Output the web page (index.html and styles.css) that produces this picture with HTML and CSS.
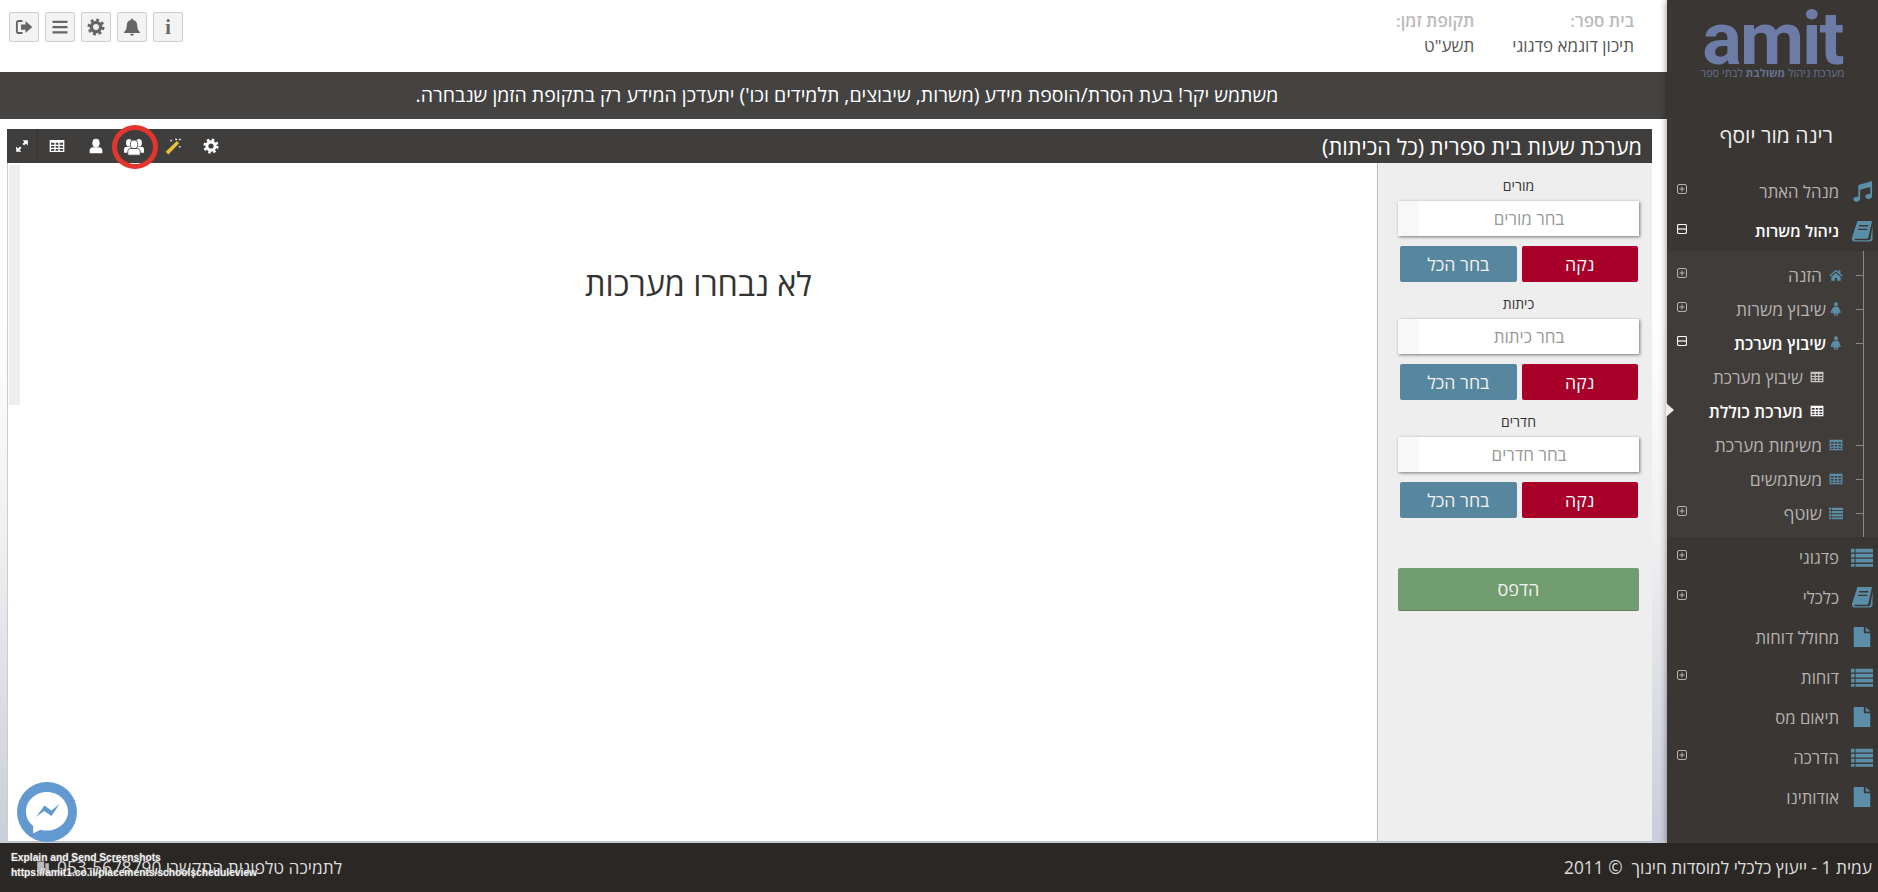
FILE: index.html
```html
<!DOCTYPE html>
<html lang="he" dir="rtl">
<head>
  <meta charset="UTF-8">
  <title>amit - מערכת כוללת</title>
  <link rel="stylesheet" href="styles.css">
</head>
<body>
  <!-- shared icons -->
  <svg class="icon-defs" xmlns="http://www.w3.org/2000/svg">
    <symbol id="i-cog" viewBox="0 0 24 24"><circle cx="12" cy="12" r="6.2" fill="none" stroke="currentColor" stroke-width="4.6"/><circle cx="12" cy="12" r="9.6" fill="none" stroke="currentColor" stroke-width="3.6" stroke-dasharray="3.8 3.74"/></symbol>
    <symbol id="i-table" viewBox="0 0 24 24"><path fill="currentColor" fill-rule="evenodd" d="M1 3h22v18H1zM3 7v3h5V7zm7 0v3h4V7zm6 0v3h5V7zM3 12v2.500h5V12zm7 0v2.500h4V12zm6 0v2.500h5V12zM3 16.500V19h5v-2.500zm7 0V19h4v-2.500zm6 0V19h5v-2.500z"/></symbol>
    <symbol id="i-list" viewBox="0 0 24 24"><path fill="currentColor" d="M0 3h4v4H0zM5 3h19v4H5zM0 8.500h4v4H0zM5 8.500h19v4H5zM0 14h4v4H0zM5 14h19v4H5zM0 19.500h4v3H0zM5 19.500h19v3H5z"/></symbol>
    <symbol id="i-file" viewBox="0 0 24 24"><path fill="currentColor" d="M3 1h11v7h7v15H3zM16 1l5 5h-5z"/></symbol>
    <symbol id="i-book" viewBox="0 0 24 24"><path fill="currentColor" fill-rule="evenodd" d="M7 1h16l-4 17.500c-.3 1.500-1 2-2.500 2H5c-1 0-1.500.7-1.300 1 .2.500.7.500 1.300.500h14.500c1 0 1.500-.5 1.800-1.500L23.500 6v15c-.5 1.500-1.500 2.500-3 2.500H4C2 23.500.5 21.500 1 19.500zM9 5.500l-.4 1.500h10l.4-1.500zM8 9.500l-.4 1.500h10l.4-1.500z"/></symbol>
    <symbol id="i-music" viewBox="0 0 24 24"><path fill="currentColor" d="M8 5.500 23 1v16.500c0 2-2 3.300-4 3.300s-3.500-1-3.500-2.700 1.800-2.800 3.700-2.800c.7 0 1.300.1 1.800.3V7.500L10 10.500v10c0 2-2 3.300-4 3.300s-3.500-1-3.500-2.700 1.800-2.800 3.700-2.800c.7 0 1.300.1 1.800.3z"/></symbol>
    <symbol id="i-home" viewBox="0 0 24 24"><path fill="currentColor" d="M12 3 .5 13l1.500 1.700L12 6l10 8.700 1.500-1.700-4-3.500V4h-3v3zM4 15.500 12 8.500l8 7V22h-6v-5h-4v5H4z"/></symbol>
    <symbol id="i-female" viewBox="0 0 24 24"><circle cx="12" cy="4" r="3.400" fill="currentColor"/><path fill="currentColor" d="M8.500 8h7l2 3 3 7-2.500 1-2.500-5 2 5.500H15V24h-2v-4.500h-2V24H9v-4.500H5.500l2-5.500L5 19l-2.500-1 3-7z"/></symbol>
    <symbol id="i-plus" viewBox="0 0 10 10"><rect x=".5" y=".5" width="9" height="9" rx="1.500" fill="none" stroke="currentColor"/><path stroke="currentColor" d="M2.500 5h5M5 2.500v5"/></symbol>
    <symbol id="i-minus" viewBox="0 0 10 10"><rect x=".5" y=".5" width="9" height="9" rx="1.500" fill="none" stroke="currentColor" stroke-width="1.200"/><path stroke="currentColor" stroke-width="1.200" d="M1 5h8"/></symbol>
  </svg>

  <div class="page">
    <aside class="sidebar">
      <div class="logo">
        <div class="logo-word" dir="ltr">amit</div>
        <div class="logo-sub">מערכת ניהול <b>משולבת</b> לבתי ספר</div>
      </div>
      <div class="user-name">רינה מור יוסף</div>

      <ul class="nav">
        <li class="nav-item"><svg class="nav-icon"><use href="#i-music"/></svg><span>מנהל האתר</span><svg class="toggle"><use href="#i-plus"/></svg></li>
        <li class="nav-item active"><svg class="nav-icon"><use href="#i-book"/></svg><span>ניהול משרות</span><svg class="toggle"><use href="#i-minus"/></svg></li>
        <li>
          <ul class="subnav">
            <li class="sub-item"><svg class="sub-icon"><use href="#i-home"/></svg><span>הזנה</span><svg class="toggle"><use href="#i-plus"/></svg></li>
            <li class="sub-item"><svg class="sub-icon narrow"><use href="#i-female"/></svg><span>שיבוץ משרות</span><svg class="toggle"><use href="#i-plus"/></svg></li>
            <li class="sub-item active"><svg class="sub-icon narrow"><use href="#i-female"/></svg><span>שיבוץ מערכת</span><svg class="toggle"><use href="#i-minus"/></svg></li>
            <li class="leaf-item"><svg class="leaf-icon"><use href="#i-table"/></svg><span>שיבוץ מערכת</span></li>
            <li class="leaf-item current"><svg class="leaf-icon"><use href="#i-table"/></svg><span>מערכת כוללת</span></li>
            <li class="sub-item"><svg class="sub-icon"><use href="#i-table"/></svg><span>משימות מערכת</span></li>
            <li class="sub-item"><svg class="sub-icon"><use href="#i-table"/></svg><span>משתמשים</span></li>
            <li class="sub-item"><svg class="sub-icon"><use href="#i-list"/></svg><span>שוטף</span><svg class="toggle"><use href="#i-plus"/></svg></li>
          </ul>
        </li>
        <li class="nav-item"><svg class="nav-icon"><use href="#i-list"/></svg><span>פדגוגי</span><svg class="toggle"><use href="#i-plus"/></svg></li>
        <li class="nav-item"><svg class="nav-icon"><use href="#i-book"/></svg><span>כלכלי</span><svg class="toggle"><use href="#i-plus"/></svg></li>
        <li class="nav-item"><svg class="nav-icon"><use href="#i-file"/></svg><span>מחולל דוחות</span></li>
        <li class="nav-item"><svg class="nav-icon"><use href="#i-list"/></svg><span>דוחות</span><svg class="toggle"><use href="#i-plus"/></svg></li>
        <li class="nav-item"><svg class="nav-icon"><use href="#i-file"/></svg><span>תיאום מס</span></li>
        <li class="nav-item"><svg class="nav-icon"><use href="#i-list"/></svg><span>הדרכה</span><svg class="toggle"><use href="#i-plus"/></svg></li>
        <li class="nav-item"><svg class="nav-icon"><use href="#i-file"/></svg><span>אודותינו</span></li>
      </ul>
    </aside>

    <main class="main">
      <header class="topbar">
        <div class="info">
          <div class="info-block">
            <div class="info-label">בית ספר:</div>
            <div class="info-value">תיכון דוגמא פדגוגי</div>
          </div>
          <div class="info-block">
            <div class="info-label">תקופת זמן:</div>
            <div class="info-value">תשע"ט</div>
          </div>
        </div>
        <div class="top-actions">
          <button class="top-btn info-i">i</button>
          <button class="top-btn"><svg viewBox="0 0 24 24"><path fill="currentColor" d="M12 1c1 0 1.600.6 1.600 1.500 3.700.7 5.400 3.500 5.400 7.500 0 4 1 6.500 3.500 8.500V20h-21v-1.500C4 16.500 5 14 5 10c0-4 1.700-6.800 5.400-7.500C10.400 1.600 11 1 12 1zM9.500 21h5a2.500 2.500 0 0 1-5 0z"/></svg></button>
          <button class="top-btn"><svg><use href="#i-cog"/></svg></button>
          <button class="top-btn"><svg viewBox="0 0 24 24"><path fill="currentColor" d="M2 3.500h20v3H2zM2 10.500h20v3H2zM2 17.500h20v3H2z"/></svg></button>
          <button class="top-btn"><svg viewBox="0 0 24 24"><path fill="none" stroke="currentColor" stroke-width="2.500" d="M10 4H5a2.500 2.500 0 0 0-2.500 2.500v11A2.500 2.500 0 0 0 5 20h5"/><path fill="currentColor" d="M8 8.500h6V4l9 8-9 8v-4.500H8z"/></svg></button>
        </div>
      </header>

      <div class="notice">משתמש יקר! בעת הסרת/הוספת מידע (משרות, שיבוצים, תלמידים וכו') יתעדכן המידע רק בתקופת הזמן שנבחרה.</div>

      <section class="panel">
        <div class="panel-head">
          <h2 class="panel-title">מערכת שעות בית ספרית (כל הכיתות)</h2>
          <div class="panel-tools">
            <svg class="tool"><use href="#i-cog"/></svg>
            <svg class="tool wand" viewBox="0 0 24 24"><path fill="currentColor" d="M17 5.500 20 8.500 6 23 2.500 19.500z"/><path fill="#fff" d="M15 1l.8 2 2-.5-.8 2-2-.3zM21 1.500l.6 1.500 1.400.4-1.400.5-.6 1.500-.6-1.500-1.400-.5 1.400-.4zM9.500 3l.5 1.500 1.500.5-1.500.5-.5 1.500-.5-1.500L7.500 5 9 4.500zM21 11l.5 1.500 1.500.5-1.500.5-.5 1.500-.5-1.500-1.500-.5 1.500-.5z"/></svg>
            <svg class="tool group" viewBox="0 0 24 24"><ellipse cx="6" cy="8" rx="3.500" ry="4.500" fill="currentColor"/><ellipse cx="18" cy="8" rx="3.500" ry="4.500" fill="currentColor"/><path fill="currentColor" d="M0 20v-4c0-2 1.500-3 3-3h6v7zM24 20v-4c0-2-1.500-3-3-3h-6v7z"/><ellipse cx="12" cy="10" rx="4.500" ry="5.200" fill="currentColor" stroke="#403e3d"/><path fill="currentColor" stroke="#403e3d" d="M4.500 23v-4c0-3 2-4 4-4h7c2 0 4 1 4 4v4z"/></svg>
            <svg class="tool" viewBox="0 0 24 24"><ellipse cx="12" cy="7.500" rx="5.500" ry="6.500" fill="currentColor"/><path fill="currentColor" d="M2.500 23v-4c0-3 2-5 5-5h9c3 0 5 2 5 5v4z"/></svg>
            <svg class="tool tool-last"><use href="#i-table"/></svg>
            <span class="tool-sep"></span>
            <svg class="tool expand" viewBox="0 0 24 24"><path fill="currentColor" d="M22 2v9l-3.200-3.200-3.300 3.300-2.600-2.600 3.300-3.300L13 2zM2 22v-9l3.200 3.200 3.300-3.300 2.600 2.600-3.300 3.300L11 22z"/></svg>
          </div>
        </div>

        <div class="panel-body">
          <div class="filters">
            <div class="filter">
              <div class="filter-label">מורים</div>
              <div class="select-box"><span>בחר מורים</span></div>
              <div class="btn-row">
                <button class="btn btn-red">נקה</button>
                <button class="btn btn-blue">בחר הכל</button>
              </div>
            </div>
            <div class="filter">
              <div class="filter-label">כיתות</div>
              <div class="select-box"><span>בחר כיתות</span></div>
              <div class="btn-row">
                <button class="btn btn-red">נקה</button>
                <button class="btn btn-blue">בחר הכל</button>
              </div>
            </div>
            <div class="filter">
              <div class="filter-label">חדרים</div>
              <div class="select-box"><span>בחר חדרים</span></div>
              <div class="btn-row">
                <button class="btn btn-red">נקה</button>
                <button class="btn btn-blue">בחר הכל</button>
              </div>
            </div>
            <button class="btn-print">הדפס</button>
          </div>
          <div class="schedule">
            <h1 class="empty-msg">לא נבחרו מערכות</h1>
            <div class="scroll-strip"></div>
          </div>
        </div>
      </section>
    </main>

    <footer class="footer">
      <div>עמית 1 - ייעוץ כלכלי למוסדות חינוך &nbsp;© 2011</div>
      <div class="support">לתמיכה טלפונית התקשרו 053-5678790
        <svg class="phone" viewBox="0 0 24 24"><path fill="currentColor" d="M2 1h12v22H2zM16 4h6v19h-6z"/></svg>
      </div>
    </footer>
  </div>

  <!-- things that lie over the page -->
  <span class="tool-ring"></span>
  <span class="current-arrow"></span>
  <div class="messenger">
    <svg viewBox="0 0 60 60"><path fill="#fff" d="M30 10c-11.600 0-21 8.500-21 19.500 0 6 2.700 11 7.200 14.500v7.500l7-3.800c2.100.6 4.400.9 6.800.9 11.600 0 21-8.500 21-19.100S41.600 10 30 10z"/><path fill="#6199d0" d="m19 35 8.500-11.500 7 5 8-6.500-8 12-7.500-5z"/></svg>
  </div>
  <div class="shot-tip" dir="ltr">
    <div>Explain and Send Screenshots</div>
    <div>https://amit1.co.il/placements/schoolscheduleview</div>
  </div>
</body>
</html>
```

FILE: styles.css
```css
* {
  box-sizing: border-box;
}
html, body {
  margin: 0;
  height: 100%;
  overflow: hidden;
}
body {
  font-family: "Open Sans", "Liberation Sans", Arial, sans-serif;
  font-size: 15px;
  color: #333;
  background: linear-gradient(#ffffff 35%, #f0f0f2 60%, #c3c8d6);
}
.icon-defs {
  display: none;
}
.page {
  display: grid;
  grid-template-columns: 211px 1fr;
  grid-template-rows: 843px 49px;
  height: 892px;
}

/* sidebar */
.sidebar {
  background-color: #3a3633;
  box-shadow: 0 0 7px rgba(0, 0, 0, 0.45);
  z-index: 1;
}
.logo {
  height: 100px;
  padding-top: 4px;
  text-align: center;
  color: #6d7ca6;
}
.logo-word {
  font-family: Roboto, "Open Sans", sans-serif;
  font-size: 74px;
  font-weight: 700;
  line-height: 70px;
  letter-spacing: -2px;
}
.logo-sub {
  margin-top: -7px;
  font-size: 11px;
  line-height: 12px;
  color: #66718f;
}
.user-name {
  height: 71px;
  line-height: 70px;
  padding-right: 45px;
  font-size: 21px;
  color: #eeeeee;
}
.nav, .subnav {
  list-style: none;
  margin: 0;
  padding: 0;
}
.nav-item, .sub-item, .leaf-item {
  display: flex;
  align-items: center;
  color: #b5b2b0;
}
.nav-item {
  height: 40px;
  padding: 0 5px 0 10px;
  font-size: 16.700px;
}
.nav-item.active {
  font-size: 16px;
}
.nav-item span {
  margin-right: 12px;
}
.nav-icon {
  width: 22px;
  height: 22px;
  color: #5b8ea8;
  flex: none;
}
.toggle {
  width: 10px;
  height: 10px;
  margin-right: auto;
  margin-bottom: 5px;
  color: #b5b2b0;
  flex: none;
}
.active {
  color: #ffffff;
  font-weight: 600;
}
.active .toggle {
  color: #ffffff;
}
.subnav {
  position: relative;
  padding: 7px 0;
  background-color: #403c3a;
}
.subnav::before {
  content: "";
  position: absolute;
  top: 0;
  bottom: 0;
  right: 14px;
  width: 1px;
  background-color: #8b8886;
}
.sub-item {
  position: relative;
  height: 34px;
  padding: 0 35px 0 10px;
  font-size: 17.400px;
}
.sub-item.active {
  font-size: 16.500px;
}
.sub-item::before {
  content: "";
  position: absolute;
  right: 15px;
  top: 17px;
  width: 7px;
  height: 1px;
  background-color: #8b8886;
}
.sub-item span {
  margin-right: 7px;
}
.sub-icon {
  width: 14px;
  height: 14px;
  color: #5b8ea8;
  flex: none;
}
.sub-icon.narrow {
  margin-left: -4px;
}
.leaf-item {
  height: 34px;
  padding-right: 54px;
  font-size: 17px;
}
.leaf-item span {
  margin-right: 7px;
}
.leaf-icon {
  width: 14px;
  height: 14px;
  color: #c9c7c5;
  flex: none;
}
.current {
  color: #ffffff;
  font-size: 16.600px;
  font-weight: 600;
}
.current .leaf-icon {
  color: #ffffff;
}

/* main column */
.main {
  display: flex;
  flex-direction: column;
  min-width: 0;
}
.topbar {
  height: 72px;
  display: flex;
  justify-content: space-between;
  background-color: #ffffff;
  padding: 12px 33px 0 9px;
}
.info {
  display: flex;
  gap: 38px;
}
.info-label {
  font-size: 17px;
  line-height: 17px;
  color: #bbbbbb;
  font-weight: 600;
}
.info-value {
  margin-top: 7px;
  font-size: 17px;
  line-height: 20px;
  color: #555555;
}
.info-block:last-child {
  min-width: 88px;
}
.top-actions {
  display: flex;
  gap: 6px;
}
.top-btn {
  width: 30px;
  height: 30px;
  padding: 5px;
  background-color: #f3f3f3;
  border: 1px solid #cccccc;
  border-radius: 2px;
  color: #666666;
}
.top-btn svg {
  display: block;
  width: 18px;
  height: 18px;
}
.info-i {
  font-family: "Liberation Serif", serif;
  font-size: 20px;
  font-weight: 700;
  line-height: 14px;
}
.notice {
  height: 47px;
  line-height: 46px;
  background-color: #444341;
  color: #ffffff;
  font-size: 19.500px;
  text-align: center;
  padding-left: 27px;
}
.panel {
  flex: 1;
  display: flex;
  flex-direction: column;
  margin: 10px 15px 2px 7px;
  background-color: #ffffff;
  border-left: 1px solid #cccccc;
  box-shadow: 0 1px 0 #bdbdbd;
}
.panel-head {
  height: 34px;
  display: flex;
  justify-content: space-between;
  align-items: center;
  background-color: #403e3d;
  margin-left: -1px;
  padding-right: 10px;
}
.panel-title {
  margin: 0;
  font-size: 21.750px;
  font-weight: 400;
  color: #ffffff;
}
.panel-tools {
  display: flex;
  align-items: center;
  height: 100%;
  color: #ffffff;
}
.tool {
  width: 16px;
  height: 16px;
  margin-left: 22.500px;
}
.tool.group {
  transform: scale(1.250);
}
.tool.wand {
  transform: scale(1.150);
}
.tool.tool-last {
  margin-left: 11px;
}
.wand {
  color: #e8c233;
}
.tool-sep {
  width: 1px;
  height: 100%;
  background-color: #363433;
}
.tool.expand {
  width: 14px;
  height: 14px;
  margin: 0 8px;
}
.panel-body {
  flex: 1;
  display: flex;
}
.filters {
  width: 275px;
  flex: none;
  padding: 13px 13px 0 20px;
  background-color: #eeeeee;
  border-left: 1px solid #bbbbbb;
}
.filter {
  margin-bottom: 12px;
}
.filter-label {
  height: 20px;
  line-height: 20px;
  margin-bottom: 5px;
  font-size: 14px;
  text-align: center;
  color: #333333;
}
.select-box {
  height: 35px;
  display: flex;
  align-items: center;
  justify-content: center;
  background: linear-gradient(to left, #ffffff 220px, #f8f8f8 220px);
  box-shadow: 1px 1px 3px rgba(0, 0, 0, 0.5);
  padding-left: 21px;
  font-size: 17px;
  color: #999999;
}
.btn-row {
  display: flex;
  gap: 5px;
  margin-top: 10px;
  padding: 0 1px 0 2px;
}
.btn {
  flex: 1;
  height: 36px;
  border: none;
  border-radius: 2px;
  font-family: inherit;
  font-size: 17.700px;
  color: #ffffff;
}
.btn-red {
  background-color: #a80029;
}
.btn-blue {
  background-color: #56879f;
  color: #f1f1f1;
}
.btn-print {
  display: block;
  width: 100%;
  height: 43px;
  margin-top: 50px;
  background-color: #719c70;
  border: none;
  border-bottom: 1px solid #5e845d;
  border-radius: 2px;
  font-family: inherit;
  font-size: 18px;
  color: #f0f0f0;
}
.schedule {
  flex: 1;
  display: flex;
  min-width: 0;
}
.empty-msg {
  flex: 1;
  margin: 0;
  padding-top: 100px;
  line-height: 40px;
  font-size: 32.400px;
  font-weight: 400;
  text-align: center;
  color: #333333;
}
.scroll-strip {
  width: 11px;
  height: 240px;
  margin: 2px 0 0 1px;
  background-color: #eeeeee;
}

/* footer */
.footer {
  grid-column: 1 / 3;
  display: flex;
  justify-content: space-between;
  align-items: center;
  padding: 0 6px 0 36px;
  background-color: #2a2725;
  color: #dddddd;
  font-size: 17.300px;
  z-index: 2;
}
.support {
  display: flex;
  align-items: center;
  gap: 7px;
}
.phone {
  width: 14px;
  height: 16px;
  color: #bbbbbb;
}

/* overlays */
.tool-ring {
  position: absolute;
  left: 112px;
  top: 125px;
  width: 46px;
  height: 44px;
  border: 5px solid #e2352d;
  border-radius: 50%;
  z-index: 3;
}
.current-arrow {
  position: absolute;
  left: 1666px;
  top: 403px;
  border-left: 8px solid #eeeeee;
  border-top: 7px solid transparent;
  border-bottom: 7px solid transparent;
  z-index: 3;
}
.messenger {
  position: absolute;
  left: 17px;
  top: 782px;
  width: 60px;
  height: 60px;
  background-color: #6199d0;
  border-radius: 50%;
  z-index: 3;
}
.messenger svg {
  display: block;
}
.shot-tip {
  position: absolute;
  left: 11px;
  top: 850px;
  font-family: "Liberation Sans", Arial, sans-serif;
  font-size: 10.250px;
  font-weight: 700;
  line-height: 15px;
  color: #f2f2f2;
  text-shadow: 0 0 2px #777;
  z-index: 4;
}
```
